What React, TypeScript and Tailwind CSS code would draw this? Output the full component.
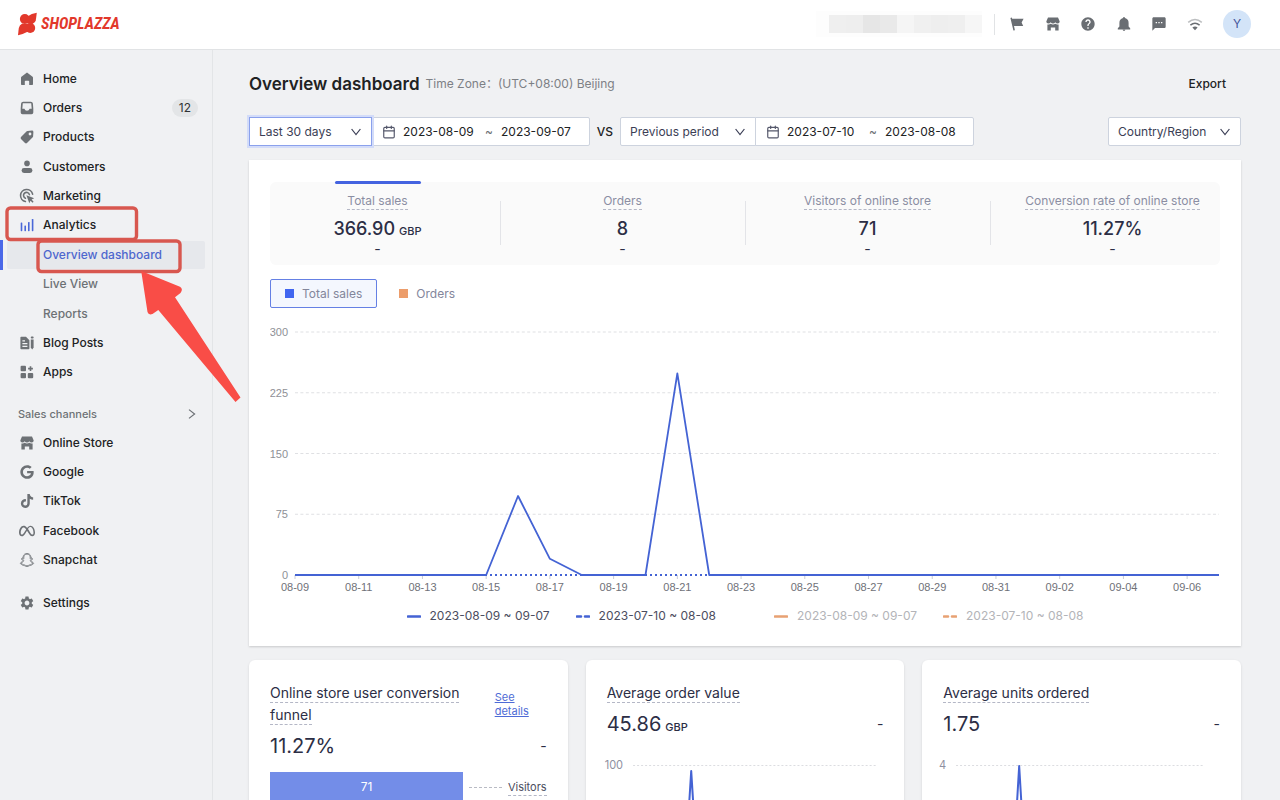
import { useState } from "react";
import type { ReactNode } from "react";
import { Calendar } from "lucide-react";
import { FaGoogle, FaMeta, FaSnapchat, FaTiktok } from "react-icons/fa6";
import { MdHelp, MdSettings, MdSms } from "react-icons/md";
import clsx from "clsx";

/* ---------- Icons ---------- */

function Glyph({ children, className = "w-4 h-4" }: { children: ReactNode; className?: string }) {
    return (
        <svg viewBox="0 0 16 16" fill="currentColor" className={clsx("shrink-0", className)} aria-hidden="true">
            {children}
        </svg>
    );
}

const HomeIcon = () => (
    <Glyph>
        <path d="M8 1.6 13.6 5.8Q14 6.1 14 6.7V13.2Q14 14 13.2 14H10.2V10.6Q10.2 9.8 9.4 9.8H6.6Q5.8 9.8 5.8 10.6V14H2.8Q2 14 2 13.2V6.7Q2 6.1 2.4 5.8Z" />
    </Glyph>
);

const OrdersIcon = () => (
    <Glyph>
        <path
            fillRule="evenodd"
            d="M4.2 1.8H11.8Q13.7 1.8 13.9 3.4L14.3 8.6V12.4Q14.3 14.2 12.5 14.2H3.5Q1.7 14.2 1.7 12.4V8.6L2.1 3.4Q2.3 1.8 4.2 1.8ZM3.8 3.3 3.3 8.8H5.4Q6 10.8 8 10.8T10.6 8.8H12.7L12.2 3.3Z"
        />
    </Glyph>
);

const ProductsIcon = () => (
    <Glyph>
        <path
            fillRule="evenodd"
            d="M8.6 1.9 13 1.6Q14.4 1.6 14.4 3L14.1 7.4Q14.1 7.9 13.7 8.3L8 14Q7 14.8 6 14L2 10Q1.2 9 2 8L7.7 2.3Q8.1 1.9 8.6 1.9ZM11 3.6A1.4 1.4 0 1 0 11 6.4 1.4 1.4 0 1 0 11 3.6Z"
        />
    </Glyph>
);

const CustomersIcon = () => (
    <Glyph>
        <circle cx="8" cy="4.4" r="2.8" />
        <rect x="2.6" y="9" width="10.8" height="5" rx="2.4" />
    </Glyph>
);

const MarketingIcon = () => (
    <Glyph>
        <g fill="none" stroke="currentColor" strokeWidth="1.6" strokeLinecap="round">
            <path d="M13.6 6.2A6.1 6.1 0 1 0 6.4 13.5" />
            <path d="M10.4 6.6A3 3 0 1 0 6.4 10.2" />
        </g>
        <path d="M7.4 7.2 15.2 10.2 12.6 11.6 14.6 13.8 13.6 14.8 11.5 12.7 10.3 15.2Z" />
    </Glyph>
);

const AnalyticsIcon = () => (
    <Glyph>
        <rect x="1.7" y="5.4" width="1.6" height="8.8" rx=".6" />
        <rect x="5.4" y="8.4" width="1.6" height="5.8" rx=".6" />
        <rect x="9" y="5" width="1.6" height="9.2" rx=".6" />
        <rect x="12.8" y="2" width="1.6" height="12.2" rx=".6" />
    </Glyph>
);

const BlogIcon = () => (
    <Glyph>
        <path
            fillRule="evenodd"
            d="M1.4 2.6Q1.4 1.8 2.2 1.8H7L10.4 5.2V13.4Q10.4 14.2 9.6 14.2H2.2Q1.4 14.2 1.4 13.4ZM3.4 5.2V6.5H6V5.2ZM3.4 8V9.3H8.4V8ZM3.4 10.8V12.1H8.4V10.8Z"
        />
        <path d="M11.8 4.6H14.6V12.4L13.2 14.6 11.8 12.4Z" />
        <rect x="11.8" y="1.4" width="2.8" height="2.2" rx=".8" />
    </Glyph>
);

const AppsIcon = () => (
    <Glyph>
        <rect x="1.6" y="1.8" width="5.4" height="5.4" rx="1" />
        <rect x="1.6" y="8.9" width="5.4" height="5.4" rx="1" />
        <rect x="8.8" y="8.9" width="5.4" height="5.4" rx="1" />
        <path d="M10.7 2.2H12.3V3.8H13.9V5.4H12.3V7H10.7V5.4H9.1V3.8H10.7Z" />
    </Glyph>
);

const StoreIcon = () => (
    <Glyph>
        <path d="M3 1.4H13L14.7 5.6Q14.6 7.5 12.7 7.5 11 7.5 10.3 6.2 9.6 7.5 8 7.5T5.7 6.2Q5 7.5 3.3 7.5 1.4 7.5 1.3 5.6Z" />
        <path d="M2.4 8.4Q4.4 8.8 5.6 7.8 8 9 10.4 7.8 11.6 8.8 13.6 8.4V14.5H10.2V11.4H5.8V14.5H2.4Z" />
    </Glyph>
);

const FlagIcon = () => (
    <Glyph>
        <path d="M1.4 2 2.8 1.6 3.2 2.8H14.6L12.6 6.4 14.2 10H5L5.9 14.2 4.4 14.6Z" />
    </Glyph>
);

const BellIcon = () => (
    <Glyph>
        <path d="M8 1Q8.9 1 9 2.1 12.6 3 12.6 7V10.6L14.2 12.2V13.4H1.8V12.2L3.4 10.6V7Q3.4 3 7 2.1 7.1 1 8 1Z" />
        <path d="M6.6 13.6H9.4Q9.2 15 8 15T6.6 13.6Z" />
    </Glyph>
);

const WifiIcon = () => (
    <Glyph>
        <g fill="none" stroke="currentColor" strokeWidth="1.5">
            <path d="M1.2 6.4Q8 .6 14.8 6.4" opacity=".45" />
            <path d="M3.4 9.2Q8 5.4 12.6 9.2" />
        </g>
        <path d="M5.4 11.4Q8 9.4 10.6 11.4L8 14.2Z" />
    </Glyph>
);

function Chevron({ className }: { className?: string }) {
    return (
        <svg viewBox="0 0 12 12" fill="none" stroke="currentColor" strokeWidth="1.2" className={clsx("w-3 h-3", className)} aria-hidden="true">
            <path d="M1.6 3 6 8.6 10.4 3" />
        </svg>
    );
}

function Logo() {
    return (
        <a href="#" aria-label="Shoplazza" className="flex items-center gap-[3px] text-[#e2382b]">
            <svg viewBox="0 0 20 24" fill="currentColor" className="w-5 h-6" aria-hidden="true">
                <circle cx="6.8" cy="7" r="4.9" />
                <circle cx="12.2" cy="16" r="5" />
                <path d="M9.5 4.4Q13.5 1.6 18.8.8L17.8 8.2Q17.4 10.8 14.5 12L6 11Z" />
                <path d="M9.6 19.7Q5.5 22 0 23.2L.8 16Q1.3 13.2 4.2 11.6L13 12.5Z" />
            </svg>
            <span className="font-['Liberation_Sans_Narrow','Roboto_Condensed',sans-serif] text-base leading-6 font-bold italic">
                SHOPLAZZA
            </span>
        </a>
    );
}

/* ---------- Header ---------- */

// Redacted store name, drawn as grey tiles
const TILES = [
    "bg-[#efefef]", "bg-[#eeeeee]", "bg-[#e6e6e6]", "bg-[#e9e9e9]", "bg-[#f5f5f5]",
    "bg-[#f0f0f0]", "bg-[#eeeeee]", "bg-[#efefef]", "bg-[#f6f6f6]",
];

function Header() {
    const actions = [
        { label: "Announcements", icon: <FlagIcon /> },
        { label: "Store", icon: <StoreIcon /> },
        { label: "Help", icon: <MdHelp className="w-4 h-4" /> },
        { label: "Notifications", icon: <BellIcon /> },
        { label: "Messages", icon: <MdSms className="w-4 h-4" /> },
        { label: "Network", icon: <WifiIcon /> },
    ];

    return (
        <header className="flex shrink-0 items-center justify-between h-[50px] pl-[18px] pr-[29px] pb-px bg-white border-b border-[#e1e3e5]">
            <Logo />
            <div className="flex items-center">
                <div className="flex pl-[13px] py-1 bg-[#fdfdfd]">
                    {TILES.map((tile, i) => (
                        <div key={i} className={clsx("h-[18px] w-[17px]", tile)} />
                    ))}
                </div>
                <div className="w-px h-[21px] ml-3 mr-3.5 bg-[#e1e3e5]" />
                <div className="flex w-[194px] justify-between text-[#6a6e73]">
                    {actions.map((action) => (
                        <button key={action.label} aria-label={action.label}>
                            {action.icon}
                        </button>
                    ))}
                </div>
                <button className="w-7 h-7 ml-5 rounded-full bg-[#d3e4f8] text-xs text-[#42549a]">Y</button>
            </div>
        </header>
    );
}

/* ---------- Sidebar ---------- */

interface NavItem {
    label: string;
    icon?: ReactNode;
    badge?: string;
    active?: boolean;
}

const MAIN_NAV: NavItem[] = [
    { label: "Home", icon: <HomeIcon /> },
    { label: "Orders", icon: <OrdersIcon />, badge: "12" },
    { label: "Products", icon: <ProductsIcon /> },
    { label: "Customers", icon: <CustomersIcon /> },
    { label: "Marketing", icon: <MarketingIcon /> },
    { label: "Analytics", icon: <span className="text-[#4a68d8]"><AnalyticsIcon /></span> },
    { label: "Overview dashboard", active: true },
    { label: "Live View" },
    { label: "Reports" },
    { label: "Blog Posts", icon: <BlogIcon /> },
    { label: "Apps", icon: <AppsIcon /> },
];

const CHANNELS: NavItem[] = [
    { label: "Online Store", icon: <StoreIcon /> },
    { label: "Google", icon: <FaGoogle className="w-4 h-3.5" /> },
    { label: "TikTok", icon: <FaTiktok className="w-4 h-3.5" /> },
    { label: "Facebook", icon: <FaMeta className="w-4 h-4" /> },
    { label: "Snapchat", icon: <FaSnapchat className="w-4 h-3.5 overflow-visible fill-none stroke-current stroke-[28px]" /> },
];

function NavLink({ item }: { item: NavItem }) {
    return (
        <li className={clsx("flex items-center", item.active && "border-l-3 border-[#4a68e8] pl-1 -ml-[7px]")}>
            <a
                href="#"
                className={clsx(
                    "flex flex-1 items-center gap-2 h-7 pl-3 pr-[7px] text-xs font-medium rounded-xs",
                    item.active && "bg-[#e6e8ec] text-[#4e67ce]",
                    !item.active && (item.icon ? "text-[#202223]" : "text-[#6d7175]")
                )}
            >
                <span className="w-4 text-[#6d7175]">{item.icon}</span>
                <span className="flex-1">{item.label}</span>
                {item.badge && (
                    <span className="px-[7px] rounded-full bg-[#e3e5e7] text-xs leading-[18px] font-normal text-[#303335]">
                        {item.badge}
                    </span>
                )}
            </a>
        </li>
    );
}

function Sidebar() {
    return (
        <nav className="shrink-0 w-[213px] pt-3.5 pl-[7px] pr-[7px] border-r border-[#e3e5e7]">
            <ul className="grid auto-rows-fr h-[323px]">
                {MAIN_NAV.map((item) => (
                    <NavLink key={item.label} item={item} />
                ))}
            </ul>
            <button className="flex w-full items-center justify-between mt-[17px] h-5 pl-[11px] pr-[7px] text-[11px] font-medium text-[#6d7175]">
                Sales channels
                <Chevron className="-rotate-90" />
            </button>
            <ul className="grid auto-rows-fr h-[147px] mt-1">
                {CHANNELS.map((item) => (
                    <NavLink key={item.label} item={item} />
                ))}
            </ul>
            <ul className="mt-3.5">
                <NavLink item={{ label: "Settings", icon: <MdSettings className="w-4 h-4" /> }} />
            </ul>
        </nav>
    );
}

/* ---------- Filters ---------- */

interface FilterSelectProps {
    label: string;
    options: string[];
    className: string;
}

function FilterSelect({ label, options, className }: FilterSelectProps) {
    return (
        <div className={clsx("relative h-[29px] border bg-white text-[#3b3e55]", className)}>
            <select aria-label={label} className="w-full h-full pl-[9px] pr-7 appearance-none bg-transparent text-xs outline-none">
                {options.map((option) => (
                    <option key={option}>{option}</option>
                ))}
            </select>
            <Chevron className="absolute right-[9px] top-2 pointer-events-none" />
        </div>
    );
}

function DateRange({ label, from, to }: { label: string; from: string; to: string }) {
    return (
        <div className="flex items-center w-[219px] h-[29px] -ml-px pl-2.5 border border-[#cdd3de] rounded-r-xs bg-white text-xs text-[#202223]">
            <Calendar className="w-3.5 h-3.5 mr-[7px] text-[#55586b]" strokeWidth={2} />
            <input aria-label={`${label} start`} defaultValue={from} className="w-[74px] outline-none" />
            <span className="w-6 text-center text-[#6d7175]">~</span>
            <input aria-label={`${label} end`} defaultValue={to} className="w-[76px] outline-none" />
        </div>
    );
}

function Filters() {
    return (
        <div className="flex items-center mt-5">
            <FilterSelect
                label="Period"
                options={["Last 30 days", "Last 7 days", "Today"]}
                className="z-10 w-[123px] border-[#8ba1ec] ring-2 ring-[#d3dcf9]"
            />
            <DateRange label="Period" from="2023-08-09" to="2023-09-07" />
            <span className="w-[30px] text-center text-xs font-medium text-[#202223]">VS</span>
            <FilterSelect label="Compare with" options={["Previous period", "Previous year"]} className="w-[136px] border-[#cdd3de] rounded-l-xs" />
            <DateRange label="Comparison" from="2023-07-10" to="2023-08-08" />
            <FilterSelect label="Country/Region" options={["Country/Region"]} className="ml-auto w-[133px] border-[#cdd3de] rounded-xs" />
        </div>
    );
}

/* ---------- Sales chart ---------- */

const DAYS = [
    "08-09", "08-10", "08-11", "08-12", "08-13", "08-14", "08-15", "08-16", "08-17", "08-18",
    "08-19", "08-20", "08-21", "08-22", "08-23", "08-24", "08-25", "08-26", "08-27", "08-28",
    "08-29", "08-30", "08-31", "09-01", "09-02", "09-03", "09-04", "09-05", "09-06", "09-07",
];
const SALES: Record<string, number> = { "08-16": 97.5, "08-17": 20, "08-21": 249 };
const LEFT = 25;
const RIGHT = 949;
const BASE = 251;

const dayX = (i: number) => LEFT + (i * (RIGHT - LEFT)) / (DAYS.length - 1);
const valueY = (v: number) => BASE - v * 0.81;

function SalesChart() {
    const points = DAYS.map((day, i) => `${dayX(i)},${valueY(SALES[day] ?? 0)}`).join(" ");

    return (
        <svg viewBox="0 0 950 272" className="block w-full mt-4 font-['Liberation_Sans',Arial,sans-serif] text-[11px]" role="img" aria-label="Total sales">
            {[300, 225, 150, 75, 0].map((tick) => (
                <g key={tick}>
                    {tick > 0 && (
                        <line x1={LEFT} x2={RIGHT} y1={valueY(tick)} y2={valueY(tick)} stroke="#dfe0e3" strokeDasharray="3 2.4" />
                    )}
                    <text x="18" y={valueY(tick) + 4} textAnchor="end" fill="#8e9096">{tick}</text>
                </g>
            ))}
            {DAYS.map((day, i) =>
                i % 2 === 0 ? (
                    <g key={day}>
                        <line x1={dayX(i)} x2={dayX(i)} y1={BASE} y2={BASE + 4} stroke="#c9ccd6" />
                        <text x={dayX(i)} y={BASE + 16} textAnchor="middle" fill="#6f7178">{day}</text>
                    </g>
                ) : null
            )}
            <line x1={LEFT} x2={RIGHT} y1={BASE} y2={BASE} stroke="#4463d4" strokeWidth="2" strokeDasharray="2 3" />
            <polyline points={points} fill="none" stroke="#4463d4" strokeWidth="1.8" strokeLinejoin="round" />
        </svg>
    );
}

function LegendItem({ text, dashed, muted }: { text: string; dashed?: boolean; muted?: boolean }) {
    return (
        <button className={clsx("flex items-center gap-[9px] text-xs leading-5", muted ? "text-[#b3b4b8]" : "text-[#4b4d60]")}>
            <svg viewBox="0 0 14 3" className={clsx("w-3.5 h-[3px]", muted ? "text-[#e8a173]" : "text-[#4463d4]")} aria-hidden="true">
                <path
                    d={dashed ? "M1 1.5H5M9 1.5H13" : "M1 1.5H13"}
                    stroke="currentColor"
                    strokeWidth="2.6"
                    strokeLinecap="round"
                />
            </svg>
            {text}
        </button>
    );
}

const METRICS = [
    { label: "Total sales", value: "366.90", unit: "GBP" },
    { label: "Orders", value: "8" },
    { label: "Visitors of online store", value: "71" },
    { label: "Conversion rate of online store", value: "11.27%" },
];

function SalesCard() {
    const [metric, setMetric] = useState("Total sales");

    return (
        <section className="mt-3.5 px-[21px] pt-[22px] pb-5 bg-white shadow-[0_1px_2px_rgba(0,0,0,0.16)]">
            <div className="rounded-md bg-[#fafafa]">
                <div className="grid grid-cols-4 -mx-[15px] h-[83px]">
                    {METRICS.map((m, i) => (
                        <button key={m.label} onClick={() => setMetric(m.label)} className="relative flex flex-col items-center pt-[11px] text-[#2c2e45]">
                            {m.label === metric && <span className="absolute -top-px w-[86px] h-[3px] rounded-full bg-[#4463e0]" />}
                            {i > 0 && <span className="absolute left-0 top-[19px] w-px h-11 bg-[#e3e4e8]" />}
                            <span className="border-b border-dashed border-[#b4b7c6] text-xs leading-4 text-[#8b8ea3]">{m.label}</span>
                            <span className="h-[22px] mt-2 text-lg leading-[22px] font-medium">
                                {m.value}
                                {m.unit && <span className="ml-1 text-[11px]">{m.unit}</span>}
                            </span>
                            <span className="text-sm leading-[18px]">-</span>
                        </button>
                    ))}
                </div>
            </div>

            <div className="flex mt-3.5 text-xs text-[#83869b]">
                <button className="flex items-center gap-2 h-[29px] px-3.5 border border-[#6580e4] rounded-xs bg-[#f4f7fe]">
                    <span className="w-[9px] h-[9px] bg-[#4166f0]" />
                    Total sales
                </button>
                <button className="flex items-center gap-2 h-[29px] ml-[22px]">
                    <span className="w-[9px] h-[9px] bg-[#ec9d6b]" />
                    Orders
                </button>
            </div>

            <SalesChart />

            <div className="flex justify-center mt-[10px] gap-[58px]">
                <div className="flex gap-[26px]">
                    <LegendItem text="2023-08-09 ~ 09-07" />
                    <LegendItem text="2023-07-10 ~ 08-08" dashed />
                </div>
                <div className="flex gap-[26px]">
                    <LegendItem text="2023-08-09 ~ 09-07" muted />
                    <LegendItem text="2023-07-10 ~ 08-08" dashed muted />
                </div>
            </div>
        </section>
    );
}

/* ---------- Small cards ---------- */

function CardTitle({ children }: { children: ReactNode }) {
    return (
        <h2 className="text-sm leading-[22px] text-[#2c2e45]">
            <span className="pb-px border-b border-dashed border-[#b4b7c6]">{children}</span>
        </h2>
    );
}

function CardValue({ value, unit }: { value: string; unit?: string }) {
    return (
        <div className="flex items-center justify-between h-6 mt-2 text-[#2c2e45]">
            <p className="text-xl leading-6">
                {value}
                {unit && <span className="ml-1 text-[11px] leading-none font-medium">{unit}</span>}
            </p>
            <span className="text-sm">-</span>
        </div>
    );
}

function FunnelCard() {
    const steps = [{ label: "Visitors", value: "71" }];

    return (
        <section className="px-[21px] pt-[22px] pb-5 rounded-md bg-white shadow-sm">
            <div className="flex justify-between">
                <div className="w-[200px]">
                    <CardTitle>Online store user conversion funnel</CardTitle>
                </div>
                <a href="#" className="w-[52px] mt-2 text-[11px] leading-[14px] text-[#4e6bd6] underline">
                    See details
                </a>
            </div>
            <CardValue value="11.27%" />
            <div className="mt-3.5">
                {steps.map((step) => (
                    <div key={step.label} className="flex items-center">
                        <div className="w-[193px] h-[30px] bg-[#738de8] text-center text-xs leading-[30px] text-white">
                            {step.value}
                        </div>
                        <span className="flex-1 mx-1.5 border-t border-dashed border-[#b9bbc4]" />
                        <span className="border-b border-dashed border-[#b4b7c6] text-[11px] leading-4 text-[#4b4d60]">{step.label}</span>
                    </div>
                ))}
            </div>
        </section>
    );
}

interface MiniChartCardProps {
    title: string;
    value: string;
    unit?: string;
    max: string;
    start: number;
    end: number;
    peakX: number;
    peakY: number;
}

function MiniChartCard({ title, value, unit, max, start, end, peakX, peakY }: MiniChartCardProps) {
    return (
        <section className="px-[21px] pt-[22px] pb-5 rounded-md bg-white shadow-sm">
            <CardTitle>{title}</CardTitle>
            <CardValue value={value} unit={unit} />
            <svg viewBox="0 0 276 120" className="block w-full mt-[21px] overflow-visible text-[11px]" role="img" aria-label={title}>
                <text x={start - 10} y="12" textAnchor="end" fill="#8e90a0">{max}</text>
                <line x1={start} x2={end} y1="8.5" y2="8.5" stroke="#dcdde1" strokeDasharray="2 2" />
                <path
                    d={`M${start} 110H${peakX - 6}L${peakX} ${peakY} ${peakX + 6} 110H${end}`}
                    fill="none"
                    stroke="#4463d4"
                    strokeWidth="2"
                    strokeLinejoin="round"
                />
            </svg>
        </section>
    );
}

/* ---------- Callouts ---------- */

function Callouts() {
    return (
        <svg viewBox="0 0 250 410" className="absolute left-0 top-0 z-20 w-[250px] h-[410px] pointer-events-none" aria-hidden="true">
            <g fill="none" stroke="#d8574f" strokeWidth="3.4">
                <rect x="7" y="208" width="129.5" height="31.5" rx="3.5" />
                <rect x="38" y="241" width="142" height="30.5" rx="3.5" />
            </g>
            <path
                fill="#f94d47"
                d="M141.2 271 180 286.8Q183.5 289 180.5 293L175 297.3 240.5 397.5 235.5 402 158.3 310 152.5 314Q148.5 315.5 147.5 312Z"
            />
        </svg>
    );
}

export default function App() {
    return (
        <div className="relative flex flex-col h-screen overflow-hidden bg-[#f0f1f3] font-['Inter','Noto_Sans_CJK_SC',sans-serif]">
            <Header />
            <div className="flex flex-1 min-h-0">
                <Sidebar />
                <main className="flex-1 overflow-y-auto [scrollbar-width:none] pt-[21px] pl-9 pr-[39px] pb-9">
                    <div className="flex items-center">
                        <h1 className="text-[17px] leading-[26px] font-semibold text-[#202223]">Overview dashboard</h1>
                        <p className="ml-1.5 text-xs text-[#7d8085]">Time Zone：(UTC+08:00) Beijing</p>
                        <button className="ml-auto mr-[15px] text-xs font-medium text-[#202223]">Export</button>
                    </div>
                    <Filters />
                    <SalesCard />
                    <div className="grid grid-cols-3 gap-[18px] mt-3.5">
                        <FunnelCard />
                        <MiniChartCard title="Average order value" value="45.86" unit="GBP" max="100" start={26} end={269} peakX={84} peakY={14} />
                        <MiniChartCard title="Average units ordered" value="1.75" max="4" start={13} end={260} peakX={76} peakY={9} />
                    </div>
                </main>
            </div>
            <Callouts />
        </div>
    );
}
